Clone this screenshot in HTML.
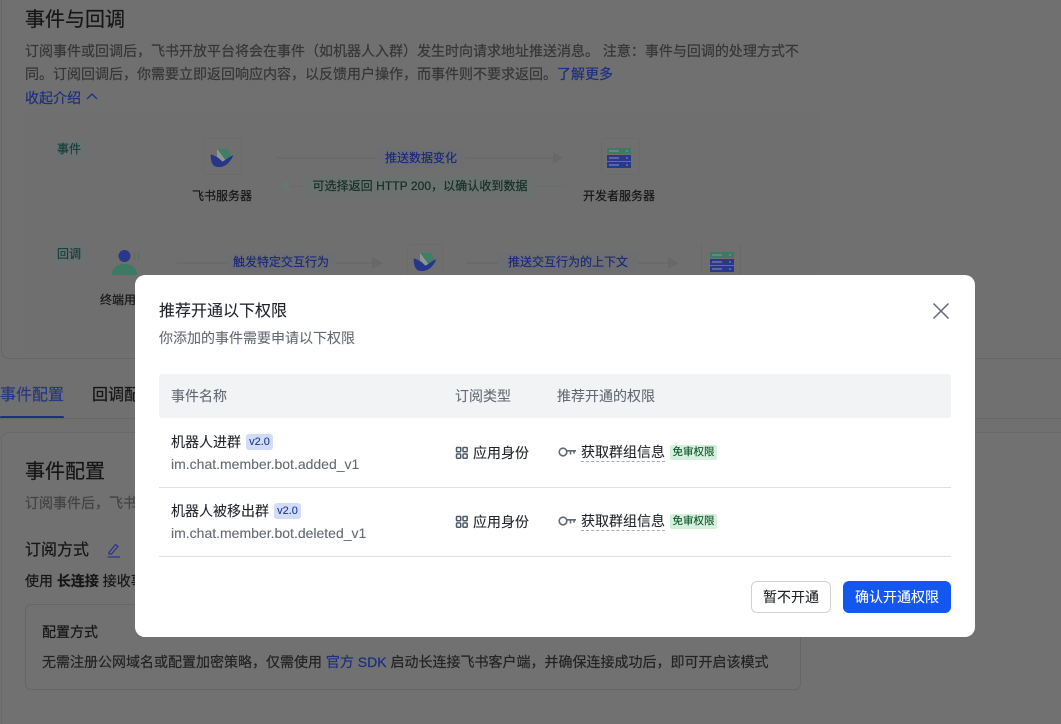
<!DOCTYPE html>
<html lang="zh-CN">
<head>
<meta charset="utf-8">
<title>推荐开通以下权限</title>
<style>
html,body{margin:0;padding:0;width:1061px;height:724px;overflow:hidden;background:#707070}
body{position:relative;font-family:"Liberation Sans","Noto Sans CJK SC",sans-serif;font-size:14px;color:#2a2a2a;-webkit-text-stroke:.2px currentColor}
.t{position:absolute;white-space:nowrap;line-height:22px}
.b{position:absolute;box-sizing:border-box}
.link{color:#1c2f80}
.d{color:#363636}
.dk{color:#161616}
.c{text-align:center}
.pill{position:absolute;height:20px;line-height:20px;font-size:12px;white-space:nowrap;background:#6d6e71;text-align:center}
svg{position:absolute;display:block}
#modal{position:absolute;left:135px;top:275px;width:840px;height:362px;background:#fff;border-radius:10px;-webkit-text-stroke:.1px currentColor}
#modal .t{color:#1f2329}
#modal .t.g{color:#646a73}
.line{position:absolute;left:24px;width:792px;height:1px;background:#dedfe1}
.tag{position:absolute;background:#d1dcfa;color:#1e3a8a;font-size:11px;height:16px;line-height:16px;width:27px;text-align:center;border-radius:3px}
.free{position:absolute;background:#d4f0dc;color:#0a4f24;font-size:10.500px;height:15px;line-height:15px;width:47px;text-align:center;border-radius:2px}
.dash{position:absolute;height:0;width:84px;border-top:1px dashed #a9acb2}
</style>
</head>
<body>

<!-- background cards -->
<div class="b" style="left:1px;top:-10px;width:1070px;height:369px;border:1px solid #666;border-radius:8px;background:#707070"></div>
<div class="b" style="left:25px;top:113px;width:796px;height:240px;background:#6f6f6f"></div>

<div class="t dk" style="left:25px;top:6px;font-size:20px;line-height:28px">事件与回调</div>
<div class="t d" style="left:25px;top:40px">订阅事件或回调后，飞书开放平台将会在事件（如机器人入群）发生时向请求地址推送消息。 注意：事件与回调的处理方式不</div>
<div class="t d" style="left:25px;top:63px">同。订阅回调后，你需要立即返回响应内容，以反馈用户操作，而事件则不要求返回。<span class="link">了解更多</span></div>
<div class="t link" style="left:25px;top:87px">收起介绍</div>
<svg style="left:86px;top:92px" width="12" height="9" viewBox="0 0 12 9"><path d="M1 7L6 2L11 7" fill="none" stroke="#1f3384" stroke-width="1.400"/></svg>

<!-- diagram row 1 -->
<div class="b" style="left:56px;top:139px;width:32px;height:21px;background:#6b7070;border-radius:3px"></div>
<div class="t" style="left:57px;top:138px;font-size:12px;color:#173f3b">事件</div>
<div class="b" style="left:203px;top:138px;width:39px;height:37px;border:1px solid #6b6b6b;border-radius:3px"></div>
<svg style="left:209px;top:148px" width="26" height="20" viewBox="0 0 27 22"><path d="M8 1H20L24 9L17 13Z" fill="#3f7f68"/><path d="M1 7C6 8 11 12 14 15C18 13 22 9 26 8C23 15 18 21 10 21C4 21 1 17 1 7Z" fill="#26378a"/><path d="M8 1L17 13L14 15L8 9Z" fill="#a8b0ac" opacity=".6"/></svg>
<div class="t dk c" style="left:182px;top:185px;width:80px;font-size:12px">飞书服务器</div>

<div class="b" style="left:277px;top:157px;width:280px;height:2px;background:#6a6a6a"></div>
<svg style="left:553px;top:152px" width="10" height="12" viewBox="0 0 10 12"><path d="M0 0L10 6L0 12Z" fill="#686868"/></svg>
<div class="pill" style="left:377px;top:148px;width:88px;color:#1c2a78">推送数据变化</div>
<div class="b" style="left:283px;top:185px;width:284px;height:2px;background:#6a6f6c"></div>
<svg style="left:279px;top:180px" width="10" height="12" viewBox="0 0 10 12"><path d="M10 0L0 6L10 12Z" fill="#697570"/></svg>
<div class="pill" style="left:305px;top:176px;width:230px;color:#152f28;background:#6a716e;letter-spacing:.06px">可选择返回 HTTP 200，以确认收到数据</div>

<div class="b" style="left:601px;top:138px;width:39px;height:37px;border:1px solid #6b6b6b;border-radius:3px"></div>
<svg style="left:607px;top:148px" width="24" height="20" viewBox="0 0 24 20"><rect width="24" height="6" fill="#3d7a64"/><rect y="7" width="24" height="6" fill="#28388a"/><rect y="14" width="24" height="6" fill="#28388a"/><path d="M2 3H12M2 10H12M2 17H12M19 3H21M19 10H21M19 17H21" stroke="#8b93b0" stroke-width="1"/></svg>
<div class="t dk c" style="left:579px;top:185px;width:80px;font-size:12px">开发者服务器</div>

<!-- diagram row 2 -->
<div class="b" style="left:54px;top:244px;width:33px;height:21px;background:#6b7070;border-radius:3px"></div>
<div class="t" style="left:57px;top:243px;font-size:12px;color:#173f3b">回调</div>
<svg style="left:110px;top:247px" width="32" height="30" viewBox="0 0 32 30"><circle cx="14.500" cy="9" r="6" fill="#28388a"/><path d="M2 28C2 20 8 17 14.500 17C21 17 27 20 27 28Z" fill="#3d7a64"/><path d="M24 6C25 8 25 11 24 13M28 5C29 8 29 11 28 14" stroke="#5a6b60" stroke-width="1" fill="none"/></svg>
<div class="t dk" style="left:100px;top:289px;font-size:12px">终端用</div>
<div class="b" style="left:177px;top:262px;width:200px;height:2px;background:#6a6a6a"></div>
<svg style="left:372px;top:257px" width="11" height="12" viewBox="0 0 11 12"><path d="M0 0L11 6L0 12Z" fill="#686868"/></svg>
<div class="pill" style="left:227px;top:252px;width:108px;color:#1c2a78">触发特定交互行为</div>
<div class="b" style="left:407px;top:244px;width:36px;height:34px;border:1px solid #6b6b6b;border-radius:3px"></div>
<svg style="left:412px;top:252px" width="26" height="20" viewBox="0 0 27 22"><path d="M8 1H20L24 9L17 13Z" fill="#3f7f68"/><path d="M1 7C6 8 11 12 14 15C18 13 22 9 26 8C23 15 18 21 10 21C4 21 1 17 1 7Z" fill="#26378a"/><path d="M8 1L17 13L14 15L8 9Z" fill="#a8b0ac" opacity=".6"/></svg>
<div class="b" style="left:466px;top:262px;width:206px;height:2px;background:#6a6a6a"></div>
<svg style="left:668px;top:257px" width="11" height="12" viewBox="0 0 11 12"><path d="M0 0L11 6L0 12Z" fill="#686868"/></svg>
<div class="pill" style="left:498px;top:252px;width:140px;color:#1c2a78">推送交互行为的上下文</div>
<div class="b" style="left:701px;top:244px;width:40px;height:34px;border-left:1px solid #696969;border-right:1px solid #696969"></div>
<svg style="left:710px;top:252px" width="24" height="20" viewBox="0 0 24 20"><rect width="24" height="6" fill="#3d7a64"/><rect y="7" width="24" height="6" fill="#28388a"/><rect y="14" width="24" height="6" fill="#28388a"/><path d="M2 3H12M2 10H12M2 17H12M19 3H21M19 10H21M19 17H21" stroke="#8b93b0" stroke-width="1"/></svg>

<!-- tabs -->
<div class="t link" style="left:0;top:385px;font-size:16px;color:#27387f">事件配置</div>
<div class="b" style="left:0;top:416px;width:64px;height:3px;background:#1c2e8c;border-radius:2px"></div>
<div class="t dk" style="left:92px;top:385px;font-size:16px">回调配</div>
<div class="b" style="left:0;top:418px;width:1061px;height:1px;background:#676767"></div>

<!-- lower card -->
<div class="b" style="left:1px;top:432px;width:1070px;height:300px;border:1px solid #696969;border-radius:8px;background:#717171"></div>
<div class="t dk" style="left:25px;top:458px;font-size:20px;line-height:28px">事件配置</div>
<div class="t" style="left:25px;top:492px;color:#434343">订阅事件后，飞书</div>
<div class="t dk" style="left:25px;top:540px;font-size:16px">订阅方式</div>
<svg style="left:106px;top:542px" width="15" height="16" viewBox="0 0 15 16"><path d="M3 10.500L9.500 2.500L12 4.500L5.500 12H3Z" fill="none" stroke="#27348a" stroke-width="1.200"/><path d="M1.500 15H14" stroke="#27348a" stroke-width="1.200"/></svg>
<div class="t dk" style="left:25px;top:570px">使用 <b>长连接</b> 接收事</div>
<div class="b" style="left:25px;top:604px;width:776px;height:86px;border:1px solid #666;border-radius:6px"></div>
<div class="t dk" style="left:42px;top:621px">配置方式</div>
<div class="t" style="left:42px;top:651px;color:#232323">无需注册公网域名或配置加密策略，仅需使用 <span class="link">官方 SDK</span> 启动长连接飞书客户端，并确保连接成功后，即可开启该模式</div>

<!-- modal -->
<div id="modal">
  <div class="t" style="left:24px;top:25px;font-size:16px;line-height:24px">推荐开通以下权限</div>
  <div class="t g" style="left:24px;top:52px">你添加的事件需要申请以下权限</div>
  <svg style="left:797px;top:27px" width="18" height="18" viewBox="0 0 18 18"><path d="M1.500 1.500L16.500 16.500M16.500 1.500L1.500 16.500" fill="none" stroke="#646a73" stroke-width="1.500"/></svg>

  <div class="b" style="left:24px;top:99px;width:792px;height:44px;background:#f2f3f5;border-radius:3px"></div>
  <div class="t g" style="left:36px;top:110px">事件名称</div>
  <div class="t g" style="left:320px;top:110px">订阅类型</div>
  <div class="t g" style="left:422px;top:110px">推荐开通的权限</div>

  <div class="t" style="left:36px;top:156px">机器人进群</div>
  <div class="tag" style="left:111px;top:159px">v2.0</div>
  <div class="t g" style="left:36px;top:178px">im.chat.member.bot.added_v1</div>
  <svg style="left:320px;top:171px" width="14" height="14" viewBox="0 0 14 14"><g fill="none" stroke="#4e5969" stroke-width="1.500"><rect x="1.500" y="1.500" width="4.200" height="4.200" rx=".8"/><rect x="8" y="1.500" width="4.200" height="4.200" rx=".8"/><rect x="1.500" y="8" width="4.200" height="4.200" rx=".8"/><rect x="8" y="8" width="4.200" height="4.200" rx=".8"/></g></svg>
  <div class="t" style="left:338px;top:167px">应用身份</div>
  <svg style="left:423px;top:171px" width="20" height="13" viewBox="0 0 20 13"><circle cx="5" cy="6" r="3.800" fill="none" stroke="#646a73" stroke-width="1.600"/><path d="M9 4.800H18M12.500 4.800V8.500M16 4.800V7.500" fill="none" stroke="#646a73" stroke-width="1.600"/></svg>
  <div class="t" style="left:446px;top:166px">获取群组信息</div>
  <div class="dash" style="left:446px;top:186px"></div>
  <div class="free" style="left:535px;top:170px">免审权限</div>
  <div class="line" style="top:212px"></div>

  <div class="t" style="left:36px;top:225px">机器人被移出群</div>
  <div class="tag" style="left:139px;top:228px">v2.0</div>
  <div class="t g" style="left:36px;top:247px">im.chat.member.bot.deleted_v1</div>
  <svg style="left:320px;top:240px" width="14" height="14" viewBox="0 0 14 14"><g fill="none" stroke="#4e5969" stroke-width="1.500"><rect x="1.500" y="1.500" width="4.200" height="4.200" rx=".8"/><rect x="8" y="1.500" width="4.200" height="4.200" rx=".8"/><rect x="1.500" y="8" width="4.200" height="4.200" rx=".8"/><rect x="8" y="8" width="4.200" height="4.200" rx=".8"/></g></svg>
  <div class="t" style="left:338px;top:236px">应用身份</div>
  <svg style="left:423px;top:240px" width="20" height="13" viewBox="0 0 20 13"><circle cx="5" cy="6" r="3.800" fill="none" stroke="#646a73" stroke-width="1.600"/><path d="M9 4.800H18M12.500 4.800V8.500M16 4.800V7.500" fill="none" stroke="#646a73" stroke-width="1.600"/></svg>
  <div class="t" style="left:446px;top:235px">获取群组信息</div>
  <div class="dash" style="left:446px;top:255px"></div>
  <div class="free" style="left:535px;top:239px">免审权限</div>
  <div class="line" style="top:281px"></div>

  <div class="b c" style="left:616px;top:306px;width:80px;height:32px;border:1px solid #d0d3d6;border-radius:6px;line-height:31px;color:#1f2329">暂不开通</div>
  <div class="b c" style="left:708px;top:306px;width:108px;height:32px;background:#1456f0;border-radius:6px;line-height:33px;color:#fff">确认开通权限</div>
</div>

</body>
</html>
